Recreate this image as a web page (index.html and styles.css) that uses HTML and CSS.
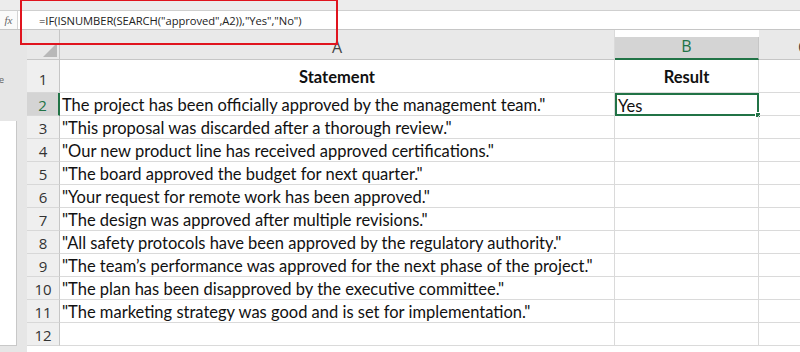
FILE: index.html
```html
<!DOCTYPE html>
<html>
<head>
<meta charset="utf-8">
<link rel="stylesheet" href="styles.css">
</head>
<body>
<div class="app">
  <div class="topstrip"></div>
  <div class="fbar">
    <div class="fxbox"><span class="fx">fx</span></div>
    <div class="formula">=IF(ISNUMBER(SEARCH("approved",A2)),"Yes","No")</div>
  </div>
  <div class="main">
    <div class="side">
      <div class="side-label">e</div>
      <div class="side-panel"></div>
    </div>
    <div class="sheet">
      <div class="corner"><span class="tri"></span></div>
      <div class="ch">A</div>
      <div class="ch ch-sel">B</div>
      <div class="ch ch-c">C</div>

      <div class="rh r1">1</div>
      <div class="cell r1 hd">Statement</div>
      <div class="cell r1 hd cb">Result</div>
      <div class="cell r1 cc"></div>

      <div class="rh rh-sel">2</div>
      <div class="cell">The project has been officially approved by the management team."</div>
      <div class="cell cb sel">Yes<span class="handle"></span></div>
      <div class="cell cc"></div>

      <div class="rh">3</div>
      <div class="cell">"This proposal was discarded after a thorough review."</div>
      <div class="cell cb"></div>
      <div class="cell cc"></div>

      <div class="rh">4</div>
      <div class="cell">"Our new product line has received approved certifications."</div>
      <div class="cell cb"></div>
      <div class="cell cc"></div>

      <div class="rh">5</div>
      <div class="cell">"The board approved the budget for next quarter."</div>
      <div class="cell cb"></div>
      <div class="cell cc"></div>

      <div class="rh">6</div>
      <div class="cell">"Your request for remote work has been approved."</div>
      <div class="cell cb"></div>
      <div class="cell cc"></div>

      <div class="rh">7</div>
      <div class="cell">"The design was approved after multiple revisions."</div>
      <div class="cell cb"></div>
      <div class="cell cc"></div>

      <div class="rh">8</div>
      <div class="cell">"All safety protocols have been approved by the regulatory authority."</div>
      <div class="cell cb"></div>
      <div class="cell cc"></div>

      <div class="rh">9</div>
      <div class="cell">"The team’s performance was approved for the next phase of the project."</div>
      <div class="cell cb"></div>
      <div class="cell cc"></div>

      <div class="rh">10</div>
      <div class="cell">"The plan has been disapproved by the executive committee."</div>
      <div class="cell cb"></div>
      <div class="cell cc"></div>

      <div class="rh">11</div>
      <div class="cell">"The marketing strategy was good and is set for implementation."</div>
      <div class="cell cb"></div>
      <div class="cell cc"></div>

      <div class="rh">12</div>
      <div class="cell"></div>
      <div class="cell cb"></div>
      <div class="cell cc"></div>
    </div>
  </div>
  <div class="highlight"></div>
</div>
</body>
</html>
```

FILE: styles.css
```css
* { box-sizing: border-box; }
html, body { margin: 0; padding: 0; }
body { width: 800px; height: 352px; overflow: hidden; background: #e6e6e6; }
.app {
  position: relative;
  width: 800px;
  height: 352px;
  overflow: hidden;
  background: #e6e6e6;
  font-family: Lato, "Liberation Sans", sans-serif;
  color: #111;
}
.topstrip {
  height: 11px;
  background: #ececec;
  border-bottom: 1px solid #cfcfcf;
}
.fbar {
  height: 19px;
  background: #fff;
  border-bottom: 1px solid #c6c6c6;
  display: flex;
  align-items: center;
}
.fxbox {
  width: 18px;
  height: 100%;
  border-right: 1px solid #d4d4d4;
  display: flex;
  align-items: center;
  justify-content: center;
  background: #fafafa;
}
.fx {
  font-family: "Liberation Serif", serif;
  font-style: italic;
  font-size: 11px;
  color: #666;
}
.formula {
  padding-left: 21px;
  font-family: "Open Sans", "Liberation Sans", sans-serif;
  font-size: 11.2px;
  color: #222;
  white-space: nowrap;
  letter-spacing: -0.05px;
}
.main {
  display: flex;
  height: 322px;
}
.side {
  width: 27px;
  flex: none;
  position: relative;
  background: #e6e6e6;
}
.side-label {
  position: absolute;
  left: -1px;
  top: 43px;
  font-family: "Open Sans", sans-serif;
  font-size: 9px;
  color: #666;
}
.side-panel {
  position: absolute;
  left: 0;
  top: 91px;
  width: 17px;
  height: 225px;
  background: #fff;
  border-right: 1px solid #c8c8c8;
  border-bottom: 1px solid #c8c8c8;
}
.sheet {
  flex: 1;
  display: grid;
  grid-template-columns: 33px 555px 144px 41px;
  grid-template-rows: 30px 33px repeat(11, 23px);
  background: #fff;
  align-content: start;
}
.corner {
  background: #e9e9e9;
  border-bottom: 1px solid #c6c6c6;
  border-right: 1px solid #c6c6c6;
  position: relative;
}
.tri {
  position: absolute;
  right: 2px;
  bottom: 2px;
  width: 0;
  height: 0;
  border-left: 14px solid transparent;
  border-bottom: 14px solid #b8b8b8;
}
.ch {
  background: #e9e9e9;
  border-bottom: 1px solid #c6c6c6;
  display: flex;
  align-items: flex-end;
  justify-content: center;
  padding-bottom: 1px;
  font-family: "Open Sans", sans-serif;
  font-size: 16px;
  color: #444;
  border-right: 1px solid #dadada;
}
.ch-sel {
  margin-top: 7px;
  background: #d4d4d4;
  border-bottom: 2px solid #217346;
  border-right: 1px solid #c6c6c6;
  color: #217346;
}
.ch-c {
  justify-content: flex-end;
  margin-right: -8px;
  border-right: none;
}
.rh {
  background: #efefef;
  border-bottom: 1px solid #d8d8d8;
  border-right: 1px solid #c6c6c6;
  display: flex;
  align-items: center;
  justify-content: center;
  padding-top: 2px;
  font-family: "Open Sans", sans-serif;
  font-size: 15px;
  color: #333;
}
.rh.r1 { align-items: flex-end; padding-bottom: 3px; }
.rh-sel {
  background: #d4d4d4;
  color: #217346;
  border-right: 2px solid #217346;
}
.cell {
  border-bottom: 1px solid #dadada;
  border-right: 1px solid #dadada;
  display: flex;
  align-items: center;
  padding-left: 2px;
  padding-top: 2px;
  font-size: 16.5px;
  white-space: nowrap;
  color: #111;
  position: relative;
}
.cell.hd {
  justify-content: center;
  font-weight: bold;
  padding-left: 0;
}
.cell.cc { border-right: none; }
.sel {
  border: 2px solid #217346;
  padding-left: 1px;
}
.handle {
  position: absolute;
  right: -4px;
  bottom: -4px;
  width: 6px;
  height: 6px;
  background: #217346;
  border: 1px solid #fff;
}
.highlight {
  position: absolute;
  left: 20px;
  top: 0;
  width: 318px;
  height: 45px;
  border: 2px solid #e0141e;
  border-top-width: 1px;
  pointer-events: none;
}
```
